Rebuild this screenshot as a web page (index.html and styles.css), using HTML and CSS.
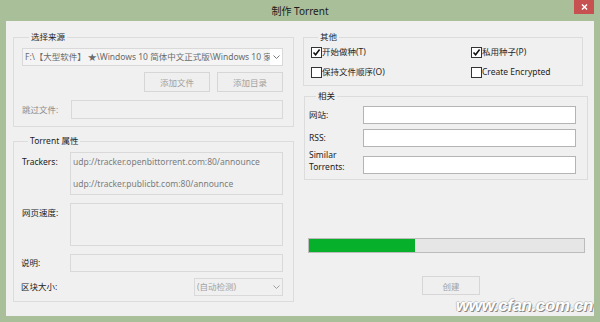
FILE: index.html
```html
<!DOCTYPE html>
<html lang="zh-CN">
<head>
  <meta charset="UTF-8">
  <title>制作 Torrent</title>
  <link rel="stylesheet" href="styles.css">
</head>
<body>
  <div class="window">
    <div class="titlebar">
      <span class="title">制作 Torrent</span>
      <button class="close" aria-label="关闭">
        <svg width="7" height="6" viewBox="0 0 7 6"><path d="M1 0.5 L6 5.5 M6 0.5 L1 5.5" stroke="#fff" stroke-width="1.5"/></svg>
      </button>
    </div>

    <div class="client">
      <div class="col col-left">
        <div class="group group-source">
          <span class="group-title">选择来源</span>
          <div class="combo combo-path">
            <span class="combo-text">F:\【大型软件】 ★\Windows 10 简体中文正式版\Windows 10 家庭版</span>
            <span class="combo-arrow"><svg width="7" height="4" viewBox="0 0 7 4"><path d="M0.5 0.5 L3.5 3.5 L6.5 0.5" fill="none" stroke="#7a7a7a"/></svg></span>
          </div>
          <div class="button-row">
            <button class="btn" disabled>添加文件</button>
            <button class="btn" disabled>添加目录</button>
          </div>
          <div class="field-row">
            <label class="field-label muted">跳过文件:</label>
            <div class="input input-disabled"></div>
          </div>
        </div>

        <div class="group group-props">
          <span class="group-title">Torrent 属性</span>
          <div class="field-row top">
            <label class="field-label">Trackers:</label>
            <div class="textarea trackers">
              <div>udp://tracker.openbittorrent.com:80/announce</div>
              <div>udp://tracker.publicbt.com:80/announce</div>
            </div>
          </div>
          <div class="field-row top">
            <label class="field-label">网页速度:</label>
            <div class="textarea"></div>
          </div>
          <div class="field-row row-desc">
            <label class="field-label">说明:</label>
            <div class="input input-disabled"></div>
          </div>
          <div class="field-row row-block">
            <label class="field-label">区块大小:</label>
            <div class="combo combo-block">
              <span class="combo-text">(自动检测)</span>
              <span class="combo-arrow"><svg width="7" height="4" viewBox="0 0 7 4"><path d="M0.5 0.5 L3.5 3.5 L6.5 0.5" fill="none" stroke="#a0a0a0"/></svg></span>
            </div>
          </div>
        </div>
      </div>

      <div class="col col-right">
        <div class="group group-other">
          <span class="group-title">其他</span>
          <div class="check-grid">
            <label class="check"><span class="box"><svg width="9" height="9" viewBox="0 0 9 9"><path d="M1.5 4.5 L3.6 6.8 L7.6 1.6" fill="none" stroke="#111" stroke-width="1.6"/></svg></span>开始做种(T)</label>
            <label class="check"><span class="box"><svg width="9" height="9" viewBox="0 0 9 9"><path d="M1.5 4.5 L3.6 6.8 L7.6 1.6" fill="none" stroke="#111" stroke-width="1.6"/></svg></span>私用种子(P)</label>
            <label class="check"><span class="box"></span>保持文件顺序(O)</label>
            <label class="check"><span class="box"></span>Create Encrypted</label>
          </div>
        </div>

        <div class="group group-related">
          <span class="group-title">相关</span>
          <div class="field-row rel-row">
            <label class="field-label">网站:</label>
            <div class="input"></div>
          </div>
          <div class="field-row rel-row">
            <label class="field-label">RSS:</label>
            <div class="input"></div>
          </div>
          <div class="field-row rel-row similar">
            <label class="field-label">Similar<br>Torrents:</label>
            <div class="input"></div>
          </div>
        </div>

        <div class="progress"><div class="progress-fill" style="width: 38.5%"></div></div>

        <button class="btn btn-create" disabled>创建</button>
      </div>

      <div class="watermark">www.cfan.com.cn</div>
    </div>
  </div>
</body>
</html>
```

FILE: styles.css
```css
:root {
  --frame-color: #a9bf99;
  --client-bg: #f0f0f0;
  --group-border: #dcdcdc;
  --input-border: #b4b4b4;
  --disabled-border: #d9d9d9;
  --text-color: #222;
  --muted-color: #8c8c8c;
  --progress-green: #06b02b;
}

body {
  margin: 0;
  padding: 0;
  font-family: "Noto Sans", "Noto Sans CJK SC", sans-serif;
  font-size: 8.5px;
  color: var(--text-color);
  background: var(--frame-color);
}

.window {
  width: 600px;
  height: 322px;
  display: flex;
  flex-direction: column;
  background: var(--frame-color);
}

/* title bar */
.titlebar {
  height: 21px;
  display: grid;
  grid-template-columns: 1fr auto 1fr;
  align-items: start;
}

.title {
  grid-column: 2;
  font-size: 10px;
  line-height: 22px;
  color: #1c1c1c;
}

.close {
  grid-column: 3;
  justify-self: end;
  margin-right: 6px;
  width: 20px;
  height: 14px;
  padding: 0;
  border: none;
  background: #c75050;
  display: flex;
  align-items: center;
  justify-content: center;
}

/* client area */
.client {
  flex: 1;
  margin: 0 6px 6px;
  padding: 0 7px;
  background: var(--client-bg);
  display: flex;
  gap: 9px;
  position: relative;
}

.col {
  display: flex;
  flex-direction: column;
  padding-top: 16px;
}

.col-left {
  width: 281px;
}

.col-right {
  width: 284px;
}

/* group boxes */
.group {
  border: 1px solid var(--group-border);
  display: flex;
  flex-direction: column;
}

.group-title {
  align-self: flex-start;
  margin: -8px 0 0 7px;
  padding: 0 2px;
  line-height: 14px;
  background: var(--client-bg);
  color: #1e1e1e;
}

.group-source {
  padding: 0 10px 7px 8px;
}

.group-props {
  margin-top: 14px;
  padding: 0 10px 5px 7px;
}

.group-other {
  margin-right: 4px;
  padding: 0 7px 5px 7px;
}

.group-related {
  margin-top: 10px;
  margin-left: 1px;
  margin-right: -1px;
  padding: 0 11px 5px 4px;
}

/* combo boxes */
.combo {
  height: 18px;
  box-sizing: border-box;
  border: 1px solid var(--disabled-border);
  display: flex;
  align-items: center;
}

.combo-text {
  flex: 1;
  white-space: nowrap;
  overflow: hidden;
  padding-left: 2px;
  line-height: 16px;
}

.combo-arrow {
  width: 11px;
  height: 16px;
  display: flex;
  align-items: center;
  justify-content: center;
}

.combo-path {
  margin-top: 4px;
  background: #f4f4f4;
}

.combo-path .combo-text {
  color: #6b6b6b;
}

.combo-path .combo-arrow {
  background: #fff;
  width: 12px;
}

.combo-block {
  width: 89px;
  margin-left: auto;
  background: #f0f0f0;
}

.combo-block .combo-text {
  color: #a3a3a3;
}

/* buttons */
.button-row {
  margin-top: 6px;
  display: flex;
  justify-content: flex-end;
  gap: 7px;
}

.btn {
  height: 20px;
  width: 66px;
  padding: 0;
  font-family: inherit;
  font-size: 8.5px;
  color: #a0a0a0;
  background: #efefef;
  border: 1px solid #d6d6d6;
}

.btn-create {
  margin-top: 23px;
  margin-left: 119px;
  width: 58px;
  height: 19px;
}

/* form rows */
.field-row {
  display: flex;
  align-items: center;
  margin-top: 8px;
}

.field-row.top {
  align-items: flex-start;
}

.group-props .field-row:first-of-type {
  margin-top: 4px;
}

.field-label {
  width: 49px;
  flex-shrink: 0;
  line-height: 16px;
  white-space: nowrap;
}

.field-row.top .field-label {
  padding-top: 2px;
  padding-left: 1px;
  width: 48px;
}

.muted {
  color: var(--muted-color);
}

.input {
  flex: 1;
  height: 19px;
  box-sizing: border-box;
  border: 1px solid var(--input-border);
  background: #fff;
}

.input-disabled {
  border-color: var(--disabled-border);
  background: #f0f0f0;
}

.row-desc .input {
  height: 18px;
}

.row-block {
  margin-top: 6px;
}

.textarea {
  flex: 1;
  height: 43px;
  box-sizing: border-box;
  border: 1px solid var(--disabled-border);
  background: #f0f0f0;
  padding: 1px 0 0 2px;
  color: #7c7c7c;
  line-height: 16px;
}

.trackers div + div {
  margin-top: 6px;
}

/* checkboxes */
.check-grid {
  display: grid;
  grid-template-columns: 160px 1fr;
  grid-auto-rows: 16px;
  row-gap: 4px;
}

.check {
  display: flex;
  align-items: center;
  line-height: 16px;
  color: #1e1e1e;
}

.box {
  width: 11px;
  height: 11px;
  box-sizing: border-box;
  border: 1px solid #333;
  background: #fff;
  display: flex;
  align-items: center;
  justify-content: center;
  flex-shrink: 0;
}

/* related */
.rel-row {
  margin-top: 5px;
}

.group-related .rel-row:first-of-type {
  margin-top: 3px;
}

.rel-row .field-label {
  width: 54px;
}

.rel-row .input {
  height: 18px;
}

.similar {
  margin-top: 2px;
  align-items: flex-start;
}

.similar .field-label {
  line-height: 12px;
}

.similar .input {
  margin-top: 7px;
}

/* progress */
.progress {
  margin: 58px 2px 0 5px;
  height: 15px;
  box-sizing: border-box;
  border: 1px solid #bcbcbc;
  background: #e6e6e6;
}

.progress-fill {
  height: 100%;
  background: var(--progress-green);
}

/* watermark overlay */
.watermark {
  position: absolute;
  right: 1px;
  bottom: 0;
  font-family: "Liberation Sans", sans-serif;
  font-size: 17px;
  font-weight: bold;
  font-style: italic;
  letter-spacing: -0.4px;
  color: #fff;
  text-shadow: 1px 1px 0 #8a8a8a, -1px 0 0 #c4c4c4, 0 -1px 0 #cfcfcf;
}
```
